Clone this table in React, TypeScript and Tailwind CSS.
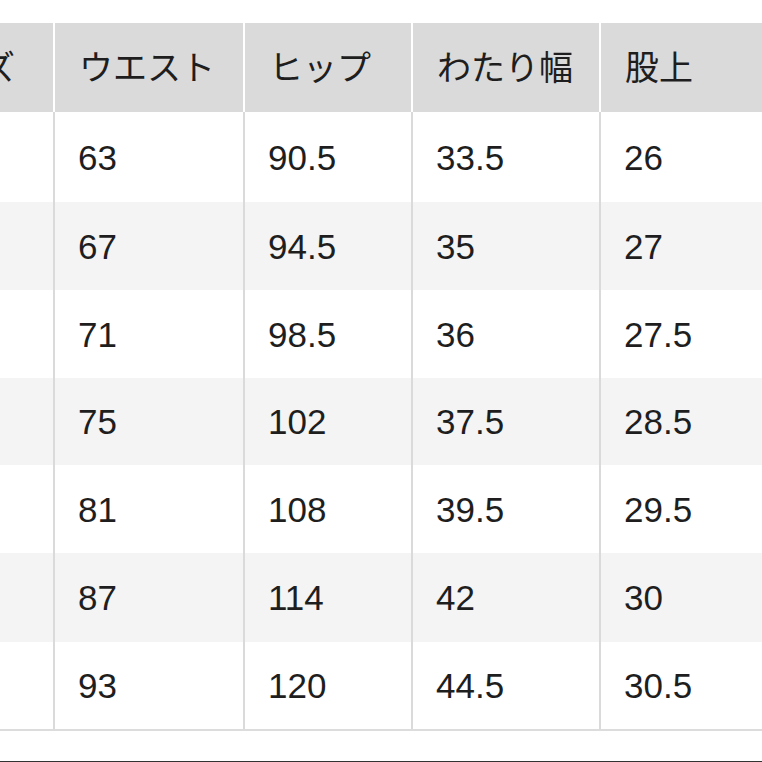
import React from "react";

const rows: { h: string; v: string[] }[] = [
  { h: "h-[90px]", v: ["63", "90.5", "33.5", "26"] },
  { h: "h-[88px]", v: ["67", "94.5", "35", "27"] },
  { h: "h-[88px]", v: ["71", "98.5", "36", "27.5"] },
  { h: "h-[87px]", v: ["75", "102", "37.5", "28.5"] },
  { h: "h-[88px]", v: ["81", "108", "39.5", "29.5"] },
  { h: "h-[89px]", v: ["87", "114", "42", "30"] },
  { h: "h-[87px]", v: ["93", "120", "44.5", "30.5"] },
];

const font = { fontFamily: '"Liberation Sans", "Noto Sans CJK JP", sans-serif' };

export default function App() {
  return (
    <div className="w-[762px] h-[762px] overflow-hidden bg-white text-[#1e1e1e]" style={font}>
      <div className="pt-[23px] ml-[-110px] w-[1100px]">
        <div className="flex h-[89px] bg-[#dadada] text-[34px] leading-none">
          <div className="w-[165px] shrink-0 border-r-2 border-white flex items-center pl-[24px]">サイズ</div>
          <div className="w-[190px] shrink-0 border-r-2 border-white flex items-center pl-[24px]">ウエスト</div>
          <div className="w-[168px] shrink-0 border-r-2 border-white flex items-center pl-[24px]">ヒップ</div>
          <div className="w-[188px] shrink-0 border-r-2 border-white flex items-center pl-[24px]">わたり幅</div>
          <div className="flex-1 flex items-center pl-[24px]">股上</div>
        </div>
        <div className="border-b-2 border-[#dcdcdc]">
          {rows.map((r, i) => (
            <div
              key={i}
              className={`flex ${r.h} text-[35px] leading-none ${i % 2 === 1 ? "bg-[#f4f4f4]" : "bg-white"}`}
            >
              <div className="w-[165px] shrink-0 border-r-2 border-[#dadada]" />
              <div className="w-[190px] shrink-0 border-r-2 border-[#dadada] flex items-center pl-[23px]">{r.v[0]}</div>
              <div className="w-[168px] shrink-0 border-r-2 border-[#dadada] flex items-center pl-[23px]">{r.v[1]}</div>
              <div className="w-[188px] shrink-0 border-r-2 border-[#dadada] flex items-center pl-[23px]">{r.v[2]}</div>
              <div className="flex-1 flex items-center pl-[23px]">{r.v[3]}</div>
            </div>
          ))}
        </div>
      </div>
      <div className="mt-[30px] h-[2px] bg-[#333333]" />
    </div>
  );
}
